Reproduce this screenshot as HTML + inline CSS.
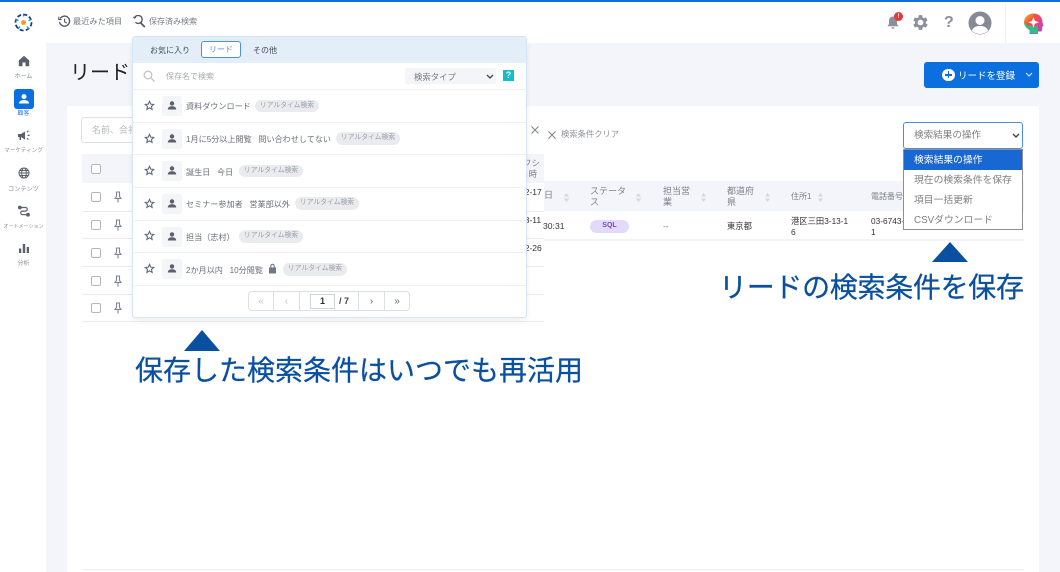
<!DOCTYPE html>
<html lang="ja"><head><meta charset="utf-8"><title>リード</title>
<style>
*{box-sizing:border-box}
html,body{margin:0;padding:0}
body{width:1060px;height:572px;overflow:hidden;position:relative;background:#f3f5fa;font-family:"Liberation Sans","Noto Sans CJK JP",sans-serif;color:#444}
.a{position:absolute}
.t{position:absolute;white-space:nowrap}
svg{position:absolute;display:block}
.nav{position:absolute;left:0;width:47px;text-align:center;font-size:6px;line-height:9px;color:#8a8f99;white-space:nowrap}
.cb{position:absolute;left:91px;width:10px;height:10px;border:1.3px solid #b5b5b5;border-radius:2px;background:#fff}
.ln{position:absolute;height:1px;background:#e9ebef}
.rowline{position:absolute;left:133px;width:393px;height:1px;background:#eef0f3}
.ava{position:absolute;left:162px;width:20px;height:20px;background:#f3f5f9;border-radius:2px}
.rt{position:absolute;font-size:8.100px;color:#6a6f78;white-space:nowrap;line-height:14px}
.tag{position:absolute;height:12.500px;line-height:12px;border-radius:7px;background:#e9ebef;color:#9a9fa8;font-size:6.800px;text-align:center;white-space:nowrap;width:64px}
.th{position:absolute;font-size:9px;color:#7d828b;line-height:11px;white-space:nowrap}
.td{position:absolute;font-size:8.300px;color:#333;line-height:11px;white-space:nowrap}
.big{position:absolute;color:#0b50a0;font-size:28px;line-height:36px;white-space:nowrap;-webkit-text-stroke:.25px #0b50a0}
.dd{position:absolute;left:904px;width:118px;height:20px;font-size:9.800px;line-height:22px;padding-left:10px;color:#808080;white-space:nowrap}
.pg{position:absolute;top:291px;height:20px;border-right:1px solid #dcdfe4;text-align:center;font-size:10px;line-height:21px;color:#c4c7cc}
</style></head>
<body>
<!-- top -->
<div class="a" style="left:0;top:0;width:1060px;height:43px;background:#fff"></div>
<div class="a" style="left:0;top:0;width:1060px;height:2px;background:#0b6fe0"></div>
<div class="a" style="left:0;top:43px;width:46px;height:529px;background:#fff"></div>
<div class="a" style="left:1005px;top:3px;width:1px;height:40px;background:#f0f1f4"></div>

<!-- logo -->
<svg style="left:13px;top:12px" width="21" height="21" viewBox="0 0 21 21">
<circle cx="10.500" cy="10.500" r="2.400" fill="#f39a1e"/>
<g fill="none" stroke="#173f8a" stroke-width="1.800" stroke-dasharray="4 2.200"><circle cx="10.500" cy="10.500" r="8"/></g>
<g stroke="#2a8bd6" stroke-width="1.300"><path d="M10.500 1.500v3M18.500 7.500l-3 1M16 17l-2-2.500M5 17l2-2.500M2.500 7.500l3 1"/></g>
</svg>

<!-- history icon -->
<svg style="left:58px;top:15px" width="13" height="13" viewBox="0 0 13 13" fill="none" stroke="#555b66" stroke-width="1.400"><path d="M2.200 3.600A5 5 0 1 1 1.600 7"/><path d="M.8 1.800v2.800h2.800" stroke-width="1.100"/><path d="M6.600 3.600v3.200l2.200 1.300" stroke-width="1.100"/></svg>
<div class="t" style="left:73px;top:15px;font-size:8.200px;line-height:14px;color:#777c85">最近みた項目</div>
<!-- saved search icon -->
<svg style="left:133px;top:15px" width="13" height="13" viewBox="0 0 13 13" fill="none" stroke="#555b66" stroke-width="1.400"><path d="M1.600 2.600A4 4 0 1 1 2.400 7.300"/><path d="M7.800 8l4 4" stroke-width="1.800"/><path d="M.3 1.800l1.200 1.400 1.500-1" stroke-width="1"/></svg>
<div class="t" style="left:149px;top:15px;font-size:8px;line-height:14px;color:#777c85">保存済み検索</div>

<!-- right icons -->
<svg style="left:886px;top:15px" width="14" height="15" viewBox="0 0 14 15"><path fill="#8a8f9b" d="M7 1.500c2.600 0 4 2 4 4.400v3.200l1.600 2.200H1.400L3 9.100V5.900C3 3.500 4.400 1.500 7 1.500zM5.500 12.300h3A1.500 1.500 0 0 1 5.500 12.300z"/></svg>
<div class="a" style="left:894px;top:12px;width:9px;height:9px;border-radius:50%;background:#ee3535;color:#fff;font-size:6.500px;line-height:9px;text-align:center;font-weight:bold">!</div>
<svg style="left:913px;top:15px" width="15" height="15" viewBox="3 3 18 18"><path fill="#8a8f9b" d="M19.400 13a7.500 7.500 0 0 0 0-2l2.100-1.600-2-3.500-2.500 1a7.500 7.500 0 0 0-1.700-1L15 3.200h-4l-.4 2.700a7.500 7.500 0 0 0-1.700 1l-2.500-1-2 3.500L6.500 11a7.500 7.500 0 0 0 0 2l-2.100 1.600 2 3.500 2.500-1a7.500 7.500 0 0 0 1.700 1l.4 2.700h4l.4-2.700a7.500 7.500 0 0 0 1.700-1l2.500 1 2-3.500zM13 15.500a3.500 3.500 0 1 1 0-7 3.500 3.500 0 0 1 0 7z" transform="translate(-1 0)"/></svg>
<div class="t" style="left:944px;top:13px;font-size:16px;line-height:20px;color:#8a8f9b;font-weight:bold">?</div>
<svg style="left:968px;top:11px" width="24" height="24" viewBox="0 0 24 24"><circle cx="12" cy="12" r="11.500" fill="#858a96"/><circle cx="12" cy="9.500" r="4.500" fill="#fff"/><path fill="#fff" d="M3.800 19.500C5.500 15.800 8.500 15 12 15s6.500.8 8.200 4.500A11 11 0 0 1 12 23a11 11 0 0 1-8.200-3.500z"/></svg>
<svg style="left:1023px;top:12px" width="21" height="23" viewBox="0 0 21 23">
<defs><linearGradient id="g" x1="0" y1="0" x2="1" y2="1"><stop offset="0" stop-color="#f6c21a"/><stop offset=".35" stop-color="#f0523d"/><stop offset=".6" stop-color="#e8418f"/><stop offset="1" stop-color="#7a5be0"/></linearGradient>
<linearGradient id="g2" x1="0" y1="1" x2="1" y2="0"><stop offset="0" stop-color="#23b5e8"/><stop offset=".6" stop-color="#34c06a"/><stop offset="1" stop-color="#34c06a" stop-opacity="0"/></linearGradient></defs>
<path fill="url(#g)" d="M10.500 1.500c5 0 9 3.600 9 8.500 0 1.500 1 3 1 3.500 0 .6-1 .9-1.300 1.200v3c0 1.200-1 1.800-2.200 1.800h-2v2.500H6.500v-4C3 16 1 13 1 10c0-5 4.500-8.500 9.500-8.500z"/>
<path fill="url(#g2)" d="M1 10c0 3 2 6 5.500 7.500v4H15V14H5z"/>
<path fill="#fff" d="M10.500 5l1.400 3.900 3.900 1.400-3.900 1.400-1.400 3.900-1.400-3.900-3.900-1.400 3.900-1.400z"/></svg>

<!-- sidebar -->
<svg style="left:18px;top:55px" width="12" height="12" viewBox="0 0 12 12"><path fill="#5a606c" d="M6 .8L11.200 5.400V11.200H7.500V7.500h-3v3.700H.8V5.400z"/></svg>
<div class="nav" style="top:73px">ホーム</div>
<div class="a" style="left:14px;top:89px;width:19.500px;height:19.500px;background:#0b6fe0;border-radius:3px"></div>
<svg style="left:18px;top:93px" width="12" height="12" viewBox="0 0 12 12"><circle cx="6" cy="3.600" r="2.500" fill="#fff"/><path fill="#fff" d="M1 10.500C1 8 3.500 7 6 7s5 1 5 3.500z"/></svg>
<div class="nav" style="top:109.500px;color:#3a7fdc">顧客</div>
<svg style="left:17px;top:130px" width="14" height="12" viewBox="0 0 14 12"><path fill="#5a606c" d="M1 4h3l4-2.500v8L4 7v3H2.500V7H1z"/><path stroke="#5a606c" stroke-width="1.200" d="M10 2l1.500-1M10.500 5.300h2.200M10 8.500l1.500 1"/></svg>
<div class="nav" style="top:147px;font-size:5.600px">マーケティング</div>
<svg style="left:18px;top:167px" width="12" height="12" viewBox="0 0 12 12" fill="none" stroke="#5a606c" stroke-width="1"><circle cx="6" cy="6" r="5"/><ellipse cx="6" cy="6" rx="2.300" ry="5"/><path d="M1 6h10M1.700 3.500h8.600M1.700 8.500h8.600"/></svg>
<div class="nav" style="top:185px;font-size:6.200px">コンテンツ</div>
<svg style="left:18px;top:205px" width="12" height="12" viewBox="0 0 12 12" fill="none" stroke="#5a606c" stroke-width="1.200"><path d="M2 2.500h5.500a1.800 1.800 0 0 1 0 3.600H4.500a1.800 1.800 0 0 0 0 3.600H10"/><circle cx="1.800" cy="2.500" r="1.300" fill="#5a606c"/><circle cx="10" cy="9.700" r="1.300" fill="#5a606c"/></svg>
<div class="nav" style="top:223px;font-size:5px">オートメーション</div>
<svg style="left:18px;top:243px" width="12" height="11" viewBox="0 0 12 11"><path fill="#5a606c" d="M1 5.500h2.300V10H1zM4.800 1h2.400v9H4.800zM8.700 4h2.300v6H8.700z"/></svg>
<div class="nav" style="top:260px">分析</div>

<!-- title + button -->
<div class="t" style="left:70px;top:58px;font-size:20px;line-height:30px;color:#222">リード</div>
<div class="a" style="left:924px;top:62px;width:115px;height:26px;background:#0b6fe0;border-radius:3px"></div>
<div class="a" style="left:942px;top:68.500px;width:12.500px;height:12.500px;border-radius:50%;background:#fff"></div>
<div class="a" style="left:945px;top:74px;width:7px;height:1.500px;background:#0b6fe0"></div>
<div class="a" style="left:947.700px;top:71.300px;width:1.500px;height:7px;background:#0b6fe0"></div>
<div class="t" style="left:958px;top:68.500px;font-size:9.500px;line-height:16px;color:#fff">リードを登録</div>
<svg style="left:1025px;top:72px" width="8" height="6" viewBox="0 0 8 6" fill="none" stroke="#e3eeff" stroke-width="1"><path d="M1 1l3 3 3-3"/></svg>

<!-- card -->
<div class="a" style="left:67px;top:106px;width:972px;height:466px;background:#fff"></div>
<div class="a" style="left:82px;top:569px;width:942px;height:1px;background:#eceef1"></div>

<!-- left table behind popup -->
<div class="a" style="left:81px;top:117px;width:60px;height:26px;border:1px solid #dfe1e5;border-radius:3px;background:#fff"></div>
<div class="t" style="left:92px;top:123px;font-size:9px;line-height:14px;color:#b5b8be">名前、会社</div>
<div class="a" style="left:82px;top:154px;width:462px;height:29px;background:#f3f5fa"></div>
<div class="cb" style="top:164px"></div>
<div class="cb" style="top:192px"></div><div class="cb" style="top:220px"></div><div class="cb" style="top:248px"></div><div class="cb" style="top:276px"></div><div class="cb" style="top:303px"></div>
<div class="ln" style="left:82px;top:211px;width:462px"></div>
<div class="ln" style="left:82px;top:238px;width:462px"></div>
<div class="ln" style="left:82px;top:266px;width:462px"></div>
<div class="ln" style="left:82px;top:294px;width:462px"></div>
<div class="ln" style="left:82px;top:321px;width:462px"></div>
<svg style="left:114px;top:191px" width="8" height="12" viewBox="0 0 8 12" fill="none" stroke="#7c8494" stroke-width="1.100"><path d="M2 1h4M2.500 1v4.500L1 7.500h6L5.500 5.500V1M4 7.500V11.500"/></svg>
<svg style="left:114px;top:219px" width="8" height="12" viewBox="0 0 8 12" fill="none" stroke="#7c8494" stroke-width="1.100"><path d="M2 1h4M2.500 1v4.500L1 7.500h6L5.500 5.500V1M4 7.500V11.500"/></svg>
<svg style="left:114px;top:247px" width="8" height="12" viewBox="0 0 8 12" fill="none" stroke="#7c8494" stroke-width="1.100"><path d="M2 1h4M2.500 1v4.500L1 7.500h6L5.500 5.500V1M4 7.500V11.500"/></svg>
<svg style="left:114px;top:275px" width="8" height="12" viewBox="0 0 8 12" fill="none" stroke="#7c8494" stroke-width="1.100"><path d="M2 1h4M2.500 1v4.500L1 7.500h6L5.500 5.500V1M4 7.500V11.500"/></svg>
<svg style="left:114px;top:302px" width="8" height="12" viewBox="0 0 8 12" fill="none" stroke="#7c8494" stroke-width="1.100"><path d="M2 1h4M2.500 1v4.500L1 7.500h6L5.500 5.500V1M4 7.500V11.500"/></svg>

<!-- strip right of popup -->
<div class="t" style="left:523px;top:158px;font-size:8.500px;line-height:11px;color:#7d828b">フシ</div>
<div class="t" style="left:520px;top:169px;font-size:8.500px;line-height:11px;color:#7d828b">日時</div>
<div class="td" style="left:520px;top:187px;font-size:8.500px">02-17</div>
<div class="td" style="left:520px;top:215px;font-size:8.500px">03-11</div>
<div class="td" style="left:520px;top:243px;font-size:8.500px">02-26</div>
<svg style="left:531px;top:126px" width="8" height="8" viewBox="0 0 8 8" stroke="#7d828b" stroke-width="1"><path d="M.5.500l7 7M7.500.500l-7 7"/></svg>
<svg style="left:548px;top:131px" width="8" height="8" viewBox="0 0 8 8" stroke="#7d828b" stroke-width="1"><path d="M.5.500l7 7M7.500.500l-7 7"/></svg>
<div class="t" style="left:561px;top:128px;font-size:8.300px;line-height:13px;color:#8f939b">検索条件クリア</div>

<!-- right table -->
<div class="a" style="left:544px;top:181px;width:480px;height:30px;background:#f3f5fa"></div>
<div class="a" style="left:544px;top:239px;width:480px;height:2px;background:#f3f4f7"></div>
<div class="th" style="left:544px;top:190px">日</div>
<div class="th" style="left:590px;top:186px">ステータ<br>ス</div>
<div class="th" style="left:663px;top:186px">担当営<br>業</div>
<div class="th" style="left:727px;top:186px">都道府<br>県</div>
<div class="th" style="left:791px;top:191px;font-size:8px">住所1</div>
<div class="th" style="left:871px;top:191px;font-size:8px">電話番号</div>
<svg style="left:564px;top:193px" width="5" height="9" viewBox="0 0 5 9" fill="#d5d8de"><path d="M2.500 0L5 3.500H0zM2.500 9L0 5.500h5z"/></svg>
<svg style="left:636px;top:193px" width="5" height="9" viewBox="0 0 5 9" fill="#d5d8de"><path d="M2.500 0L5 3.500H0zM2.500 9L0 5.500h5z"/></svg>
<svg style="left:701px;top:193px" width="5" height="9" viewBox="0 0 5 9" fill="#d5d8de"><path d="M2.500 0L5 3.500H0zM2.500 9L0 5.500h5z"/></svg>
<svg style="left:765px;top:193px" width="5" height="9" viewBox="0 0 5 9" fill="#d5d8de"><path d="M2.500 0L5 3.500H0zM2.500 9L0 5.500h5z"/></svg>
<svg style="left:818px;top:193px" width="5" height="9" viewBox="0 0 5 9" fill="#d5d8de"><path d="M2.500 0L5 3.500H0zM2.500 9L0 5.500h5z"/></svg>
<div class="td" style="left:543px;top:220.500px;font-size:8.600px">30:31</div>
<div class="a" style="left:590px;top:220px;width:39px;height:13px;border-radius:7px;background:#e3daf9;color:#7a45c9;font-size:7px;font-weight:bold;line-height:12px;text-align:center">SQL</div>
<div class="td" style="left:663px;top:220.500px;color:#777">--</div>
<div class="td" style="left:727px;top:220.500px">東京都</div>
<div class="td" style="left:791px;top:215.500px">港区三田3-13-1<br>6</div>
<div class="td" style="left:871px;top:215.500px">03-6743-<br>1</div>

<!-- select + dropdown -->
<div class="a" style="left:903px;top:122px;width:120px;height:27px;border:1px solid #4a90e2;border-radius:3px;background:#fff"></div>
<div class="t" style="left:914px;top:128px;font-size:9.600px;line-height:15px;color:#808080">検索結果の操作</div>
<svg style="left:1012px;top:133px" width="8" height="6" viewBox="0 0 8 6" fill="none" stroke="#444" stroke-width="1.400"><path d="M1 1l3 3 3-3"/></svg>
<div class="a" style="left:903px;top:149px;width:120px;height:81px;border:1px solid #8f8f8f;background:#fff"></div>
<div class="dd" style="top:150px;background:#1967d2;color:#fff">検索結果の操作</div>
<div class="dd" style="top:170px">現在の検索条件を保存</div>
<div class="dd" style="top:190px">項目一括更新</div>
<div class="dd" style="top:210px">CSVダウンロード</div>

<!-- popup -->
<div class="a" style="left:132px;top:36px;width:395px;height:282px;background:#fff;border:1px solid #d5e4f7;border-radius:3px;box-shadow:0 3px 6px rgba(0,0,0,.06)"></div>
<div class="a" style="left:133px;top:37px;width:393px;height:26px;background:#e4eef9;border-radius:2px 2px 0 0"></div>
<div class="t" style="left:150px;top:42.500px;font-size:8px;line-height:15px;color:#444b57">お気に入り</div>
<div class="a" style="left:201px;top:41px;width:40px;height:17px;background:#fff;border:1px solid #4a90e2;border-radius:3px;color:#4a90e2;font-size:8px;line-height:16px;text-align:center">リード</div>
<div class="t" style="left:253px;top:42.500px;font-size:8px;line-height:15px;color:#444b57">その他</div>
<svg style="left:143px;top:70px" width="12" height="12" viewBox="0 0 12 12" fill="none" stroke="#c2c4c8" stroke-width="1.300"><circle cx="5" cy="5" r="3.800"/><path d="M8 8l3.500 3.500"/></svg>
<div class="t" style="left:166px;top:69.500px;font-size:8px;line-height:14px;color:#a6a9af">保存名で検索</div>
<div class="a" style="left:405px;top:68px;width:91px;height:16px;background:#f3f5f9;border-radius:2px"></div>
<div class="t" style="left:414px;top:69.500px;font-size:8.400px;line-height:14px;color:#777c85">検索タイプ</div>
<svg style="left:486px;top:74px" width="8" height="6" viewBox="0 0 8 6" fill="none" stroke="#444" stroke-width="1.300"><path d="M1 1l3 3 3-3"/></svg>
<div class="a" style="left:503px;top:70px;width:11px;height:11px;background:#12bfc9;color:#fff;font-size:9px;font-weight:bold;line-height:11px;text-align:center">?</div>

<div class="rowline" style="top:89px"></div>
<div class="rowline" style="top:122px"></div>
<div class="rowline" style="top:154px"></div>
<div class="rowline" style="top:187px"></div>
<div class="rowline" style="top:220px"></div>
<div class="rowline" style="top:252px"></div>
<div class="rowline" style="top:285px"></div>

<!-- rows -->
<svg style="left:144px;top:100px" width="11" height="11" viewBox="0 0 24 24" fill="none" stroke="#5f6b7d" stroke-width="2.400"><path d="M12 3l2.700 6 6.500.7-4.900 4.400 1.400 6.400L12 17.200l-5.700 3.300 1.400-6.400-4.900-4.400 6.500-.7z"/></svg>
<svg style="left:144px;top:133px" width="11" height="11" viewBox="0 0 24 24" fill="none" stroke="#5f6b7d" stroke-width="2.400"><path d="M12 3l2.700 6 6.500.7-4.900 4.400 1.400 6.400L12 17.200l-5.700 3.300 1.400-6.400-4.900-4.400 6.500-.7z"/></svg>
<svg style="left:144px;top:165px" width="11" height="11" viewBox="0 0 24 24" fill="none" stroke="#5f6b7d" stroke-width="2.400"><path d="M12 3l2.700 6 6.500.7-4.900 4.400 1.400 6.400L12 17.200l-5.700 3.300 1.400-6.400-4.900-4.400 6.500-.7z"/></svg>
<svg style="left:144px;top:198px" width="11" height="11" viewBox="0 0 24 24" fill="none" stroke="#5f6b7d" stroke-width="2.400"><path d="M12 3l2.700 6 6.500.7-4.900 4.400 1.400 6.400L12 17.200l-5.700 3.300 1.400-6.400-4.900-4.400 6.500-.7z"/></svg>
<svg style="left:144px;top:230px" width="11" height="11" viewBox="0 0 24 24" fill="none" stroke="#5f6b7d" stroke-width="2.400"><path d="M12 3l2.700 6 6.500.7-4.900 4.400 1.400 6.400L12 17.200l-5.700 3.300 1.400-6.400-4.900-4.400 6.500-.7z"/></svg>
<svg style="left:144px;top:263px" width="11" height="11" viewBox="0 0 24 24" fill="none" stroke="#5f6b7d" stroke-width="2.400"><path d="M12 3l2.700 6 6.500.7-4.900 4.400 1.400 6.400L12 17.200l-5.700 3.300 1.400-6.400-4.900-4.400 6.500-.7z"/></svg>

<div class="ava" style="top:96px"></div><div class="ava" style="top:129px"></div><div class="ava" style="top:161px"></div><div class="ava" style="top:194px"></div><div class="ava" style="top:227px"></div><div class="ava" style="top:259px"></div>
<svg style="left:167px;top:101px" width="10" height="9" viewBox="0 0 10 9" fill="#5a606c"><circle cx="5" cy="2.400" r="2.200"/><path d="M.8 8.500C.8 6 3 5.300 5 5.300s4.200.7 4.200 3.200z"/></svg>
<svg style="left:167px;top:134px" width="10" height="9" viewBox="0 0 10 9" fill="#5a606c"><circle cx="5" cy="2.400" r="2.200"/><path d="M.8 8.500C.8 6 3 5.300 5 5.300s4.200.7 4.200 3.200z"/></svg>
<svg style="left:167px;top:166px" width="10" height="9" viewBox="0 0 10 9" fill="#5a606c"><circle cx="5" cy="2.400" r="2.200"/><path d="M.8 8.500C.8 6 3 5.300 5 5.300s4.200.7 4.200 3.200z"/></svg>
<svg style="left:167px;top:199px" width="10" height="9" viewBox="0 0 10 9" fill="#5a606c"><circle cx="5" cy="2.400" r="2.200"/><path d="M.8 8.500C.8 6 3 5.300 5 5.300s4.200.7 4.200 3.200z"/></svg>
<svg style="left:167px;top:232px" width="10" height="9" viewBox="0 0 10 9" fill="#5a606c"><circle cx="5" cy="2.400" r="2.200"/><path d="M.8 8.500C.8 6 3 5.300 5 5.300s4.200.7 4.200 3.200z"/></svg>
<svg style="left:167px;top:264px" width="10" height="9" viewBox="0 0 10 9" fill="#5a606c"><circle cx="5" cy="2.400" r="2.200"/><path d="M.8 8.500C.8 6 3 5.300 5 5.300s4.200.7 4.200 3.200z"/></svg>

<div class="rt" style="left:186px;top:99.500px">資料ダウンロード</div><div class="tag" style="left:255px;top:99.500px">リアルタイム検索</div>
<div class="rt" style="left:186px;top:132.500px">1月に5分以上閲覧&nbsp;&nbsp;&nbsp;問い合わせしてない</div><div class="tag" style="left:336px;top:132px">リアルタイム検索</div>
<div class="rt" style="left:186px;top:165.500px">誕生日&nbsp;&nbsp;&nbsp;今日</div><div class="tag" style="left:239px;top:164.500px">リアルタイム検索</div>
<div class="rt" style="left:186px;top:197.500px">セミナー参加者&nbsp;&nbsp;&nbsp;営業部以外</div><div class="tag" style="left:295px;top:197px">リアルタイム検索</div>
<div class="rt" style="left:186px;top:230.500px">担当（志村）</div><div class="tag" style="left:239px;top:230px">リアルタイム検索</div>
<div class="rt" style="left:186px;top:263.500px">2か月以内&nbsp;&nbsp;&nbsp;10分閲覧</div>
<svg style="left:268px;top:263px" width="9" height="11" viewBox="0 0 9 11"><path fill="#6f7888" d="M1 4.500h7v6H1z"/><path d="M2.800 4.500V3a1.700 1.700 0 0 1 3.400 0v1.500" fill="none" stroke="#6f7888" stroke-width="1.100"/></svg>
<div class="tag" style="left:283px;top:263px">リアルタイム検索</div>

<!-- pager -->
<div class="a" style="left:248px;top:291px;width:162px;height:20px;border:1px solid #dcdfe4;border-radius:4px;background:#fff"></div>
<div class="pg" style="left:249px;width:25px">«</div>
<div class="pg" style="left:274px;width:26px">‹</div>
<div class="pg" style="left:300px;width:59px"></div>
<div class="a" style="left:310px;top:293.500px;width:25px;height:15px;border:1px solid #cfd2d7;font-size:9px;font-weight:bold;line-height:13px;text-align:center;color:#333">1</div>
<div class="t" style="left:339px;top:294px;font-size:9px;font-weight:bold;line-height:14px;color:#444">/ 7</div>
<div class="pg" style="left:359px;width:26px;color:#666">›</div>
<div class="a" style="left:385px;top:291px;width:24px;height:20px;text-align:center;font-size:10px;line-height:21px;color:#666">»</div>

<!-- annotations -->
<svg style="left:184px;top:330px" width="36" height="21" viewBox="0 0 36 21"><path fill="#0b50a0" d="M18 0l18 21H0z"/></svg>
<div class="big" style="left:135px;top:353px">保存した検索条件はいつでも再活用</div>
<svg style="left:932px;top:242px" width="36" height="20" viewBox="0 0 36 20"><path fill="#0b50a0" d="M18 0l18 20H0z"/></svg>
<div class="big" style="left:719px;top:270px;letter-spacing:-.3px">リードの検索条件を保存</div>
</body></html>
